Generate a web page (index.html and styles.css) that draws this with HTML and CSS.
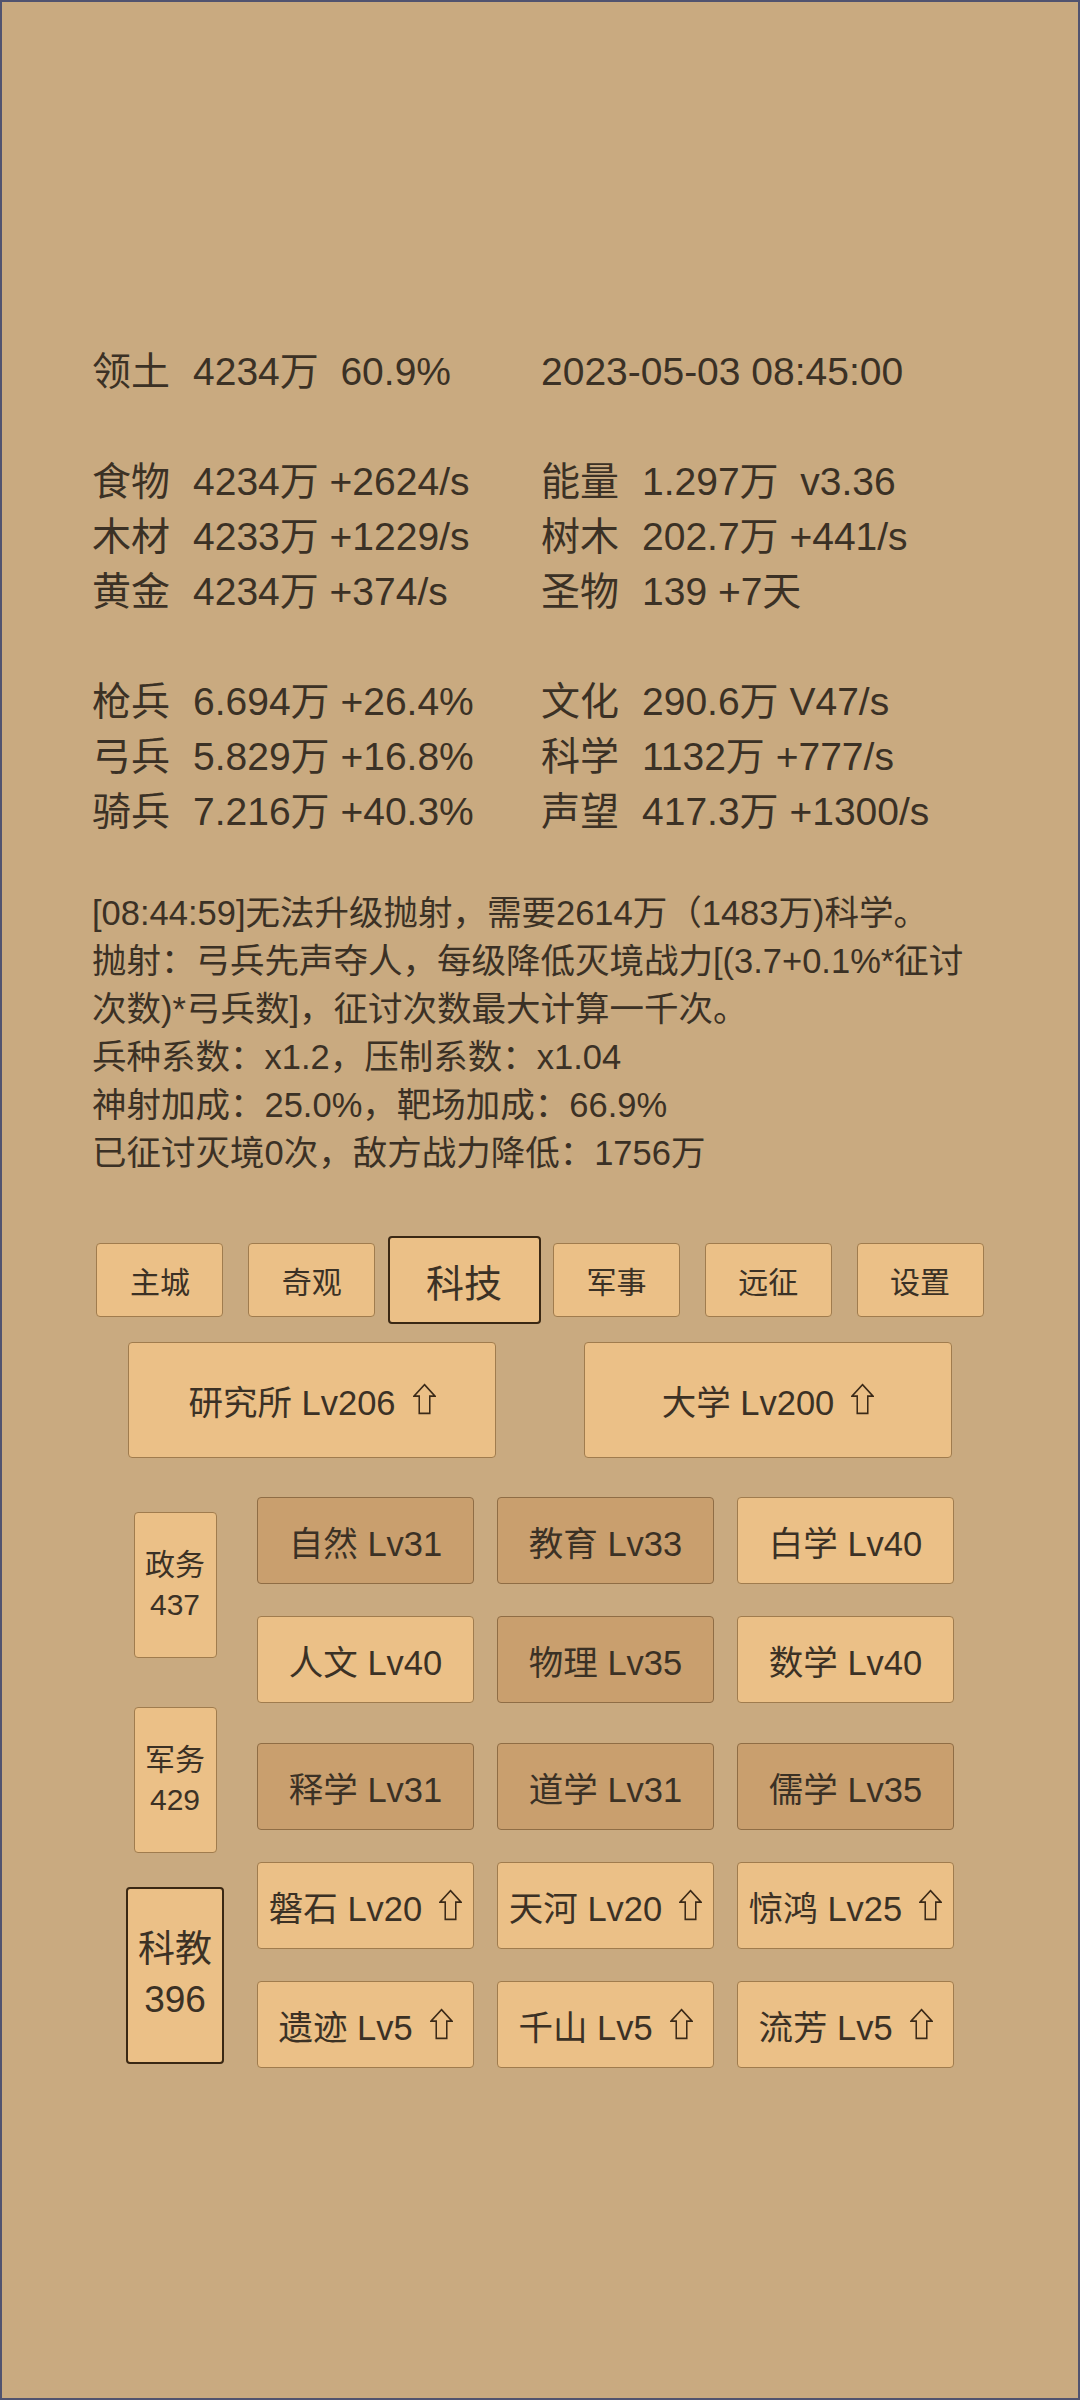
FILE: index.html
```html
<!DOCTYPE html>
<html>
<head>
    <meta charset="utf-8">
    <link rel="stylesheet" href="styles.css">
</head>
<body>
    <div class="stats">
        <div class="stat-group">
            <div class="stat"><span class="k">领土</span><span class="v">4234万  60.9%</span></div>
            <div class="stat"><span class="v">2023-05-03 08:45:00</span></div>
        </div>
        <div class="stat-group">
            <div class="stat"><span class="k">食物</span><span class="v">4234万 +2624/s</span></div>
            <div class="stat"><span class="k">能量</span><span class="v">1.297万  v3.36</span></div>
            <div class="stat"><span class="k">木材</span><span class="v">4233万 +1229/s</span></div>
            <div class="stat"><span class="k">树木</span><span class="v">202.7万 +441/s</span></div>
            <div class="stat"><span class="k">黄金</span><span class="v">4234万 +374/s</span></div>
            <div class="stat"><span class="k">圣物</span><span class="v">139 +7天</span></div>
        </div>
        <div class="stat-group">
            <div class="stat"><span class="k">枪兵</span><span class="v">6.694万 +26.4%</span></div>
            <div class="stat"><span class="k">文化</span><span class="v">290.6万 V47/s</span></div>
            <div class="stat"><span class="k">弓兵</span><span class="v">5.829万 +16.8%</span></div>
            <div class="stat"><span class="k">科学</span><span class="v">1132万 +777/s</span></div>
            <div class="stat"><span class="k">骑兵</span><span class="v">7.216万 +40.3%</span></div>
            <div class="stat"><span class="k">声望</span><span class="v">417.3万 +1300/s</span></div>
        </div>
    </div>

    <div class="message">
        <div>[08:44:59]无法升级抛射，需要2614万（1483万)科学。</div>
        <div>抛射：弓兵先声夺人，每级降低灭境战力[(3.7+0.1%*征讨次数)*弓兵数]，征讨次数最大计算一千次。</div>
        <div>兵种系数：x1.2，压制系数：x1.04</div>
        <div>神射加成：25.0%，靶场加成：66.9%</div>
        <div>已征讨灭境0次，敌方战力降低：1756万</div>
    </div>

    <div class="tabs">
        <div class="tab">主城</div>
        <div class="tab">奇观</div>
        <div class="tab active">科技</div>
        <div class="tab">军事</div>
        <div class="tab">远征</div>
        <div class="tab">设置</div>
    </div>

    <div class="halls">
        <div class="btn hall"><span>研究所 Lv206</span><svg class="up" viewBox="0 0 24 32"><polygon points="12,1 23,13 17.5,13 17.5,31 6.5,31 6.5,13 1,13"/></svg></div>
        <div class="btn hall"><span>大学 Lv200</span><svg class="up" viewBox="0 0 24 32"><polygon points="12,1 23,13 17.5,13 17.5,31 6.5,31 6.5,13 1,13"/></svg></div>
    </div>

    <div class="tech">
        <div class="side">
            <div class="side-slot"><div class="side-btn">政务<br>437</div></div>
            <div class="side-slot"><div class="side-btn">军务<br>429</div></div>
            <div class="side-slot"><div class="side-btn active">科教<br>396</div></div>
        </div>
        <div class="tech-grid">
            <div class="btn dark">自然 Lv31</div>
            <div class="btn dark">教育 Lv33</div>
            <div class="btn">白学 Lv40</div>

            <div class="btn">人文 Lv40</div>
            <div class="btn dark">物理 Lv35</div>
            <div class="btn">数学 Lv40</div>

            <div class="btn dark">释学 Lv31</div>
            <div class="btn dark">道学 Lv31</div>
            <div class="btn dark">儒学 Lv35</div>

            <div class="btn"><span>磐石 Lv20</span><svg class="up" viewBox="0 0 24 32"><polygon points="12,1 23,13 17.5,13 17.5,31 6.5,31 6.5,13 1,13"/></svg></div>
            <div class="btn"><span>天河 Lv20</span><svg class="up" viewBox="0 0 24 32"><polygon points="12,1 23,13 17.5,13 17.5,31 6.5,31 6.5,13 1,13"/></svg></div>
            <div class="btn"><span>惊鸿 Lv25</span><svg class="up" viewBox="0 0 24 32"><polygon points="12,1 23,13 17.5,13 17.5,31 6.5,31 6.5,13 1,13"/></svg></div>

            <div class="btn"><span>遗迹 Lv5</span><svg class="up" viewBox="0 0 24 32"><polygon points="12,1 23,13 17.5,13 17.5,31 6.5,31 6.5,13 1,13"/></svg></div>
            <div class="btn"><span>千山 Lv5</span><svg class="up" viewBox="0 0 24 32"><polygon points="12,1 23,13 17.5,13 17.5,31 6.5,31 6.5,13 1,13"/></svg></div>
            <div class="btn"><span>流芳 Lv5</span><svg class="up" viewBox="0 0 24 32"><polygon points="12,1 23,13 17.5,13 17.5,31 6.5,31 6.5,13 1,13"/></svg></div>
        </div>
    </div>
</body>
</html>
```

FILE: styles.css
```css
html {
    background-color: #c9aa80;
}

body {
    font-family: "Liberation Sans", "Noto Sans CJK SC", sans-serif;
    color: #3b3125;
    background-color: #c9aa80;
    margin: 0;
    width: 1080px;
    min-height: 2400px;
    box-sizing: border-box;
    border: 2px solid #51536f;
}

/* resource lines */
.stats {
    padding: 342px 0 0 90px;
    font-size: 39px;
    line-height: 55px;
}

.stat-group {
    display: grid;
    grid-template-columns: 449px auto;
    margin-bottom: 55px;
}

.stat-group:last-child {
    margin-bottom: 0;
}

.stat {
    white-space: pre;
}

.k {
    display: inline-block;
    width: 101px;
}

.message {
    margin-top: 50px;
    padding-left: 90px;
    width: 890px;
    font-size: 34.5px;
    line-height: 48px;
}

/* page tabs */
.tabs {
    display: grid;
    grid-template-columns: repeat(6, 1fr);
    justify-items: center;
    align-items: center;
    height: 88px;
    margin-top: 59px;
    padding: 0 82px;
}

.tab {
    width: 127px;
    height: 74px;
    box-sizing: border-box;
    display: flex;
    align-items: center;
    justify-content: center;
    font-size: 30px;
    background-color: #ebc087;
    border: 1.5px solid #a07c4e;
    border-radius: 4px;
}

.tab.active {
    width: 153px;
    height: 88px;
    font-size: 38px;
    border: 2px solid #3a2814;
}

.btn {
    box-sizing: border-box;
    display: flex;
    align-items: center;
    justify-content: center;
    white-space: pre;
    font-size: 34.5px;
    background-color: #ebc087;
    border: 1.5px solid #a07c4e;
    border-radius: 4px;
}

.btn.dark {
    background-color: #c99f6e;
    border-color: #8f6d45;
}

.up {
    width: 23px;
    height: 32px;
    margin: 0 0 2px 17px;
    flex-shrink: 0;
    fill: none;
    stroke: #3b2a18;
    stroke-width: 1.6;
}

.halls {
    display: grid;
    grid-template-columns: 1fr 1fr;
    justify-items: center;
    margin-top: 18px;
    padding: 0 82px;
}

.hall {
    width: 368px;
    height: 116px;
}

/* tech tree */
.tech {
    display: flex;
    margin-top: 29.5px;
    padding-left: 91px;
}

.side {
    width: 164px;
    display: flex;
    flex-direction: column;
}

.side-slot {
    height: 195px;
    display: flex;
    align-items: center;
    justify-content: center;
}

.side-btn {
    width: 83px;
    height: 146px;
    box-sizing: border-box;
    display: flex;
    align-items: center;
    justify-content: center;
    text-align: center;
    font-size: 30px;
    line-height: 40px;
    background-color: #ebc087;
    border: 1.5px solid #a07c4e;
    border-radius: 4px;
}

.side-btn.active {
    width: 98px;
    height: 177px;
    font-size: 37px;
    line-height: 50px;
    border: 2px solid #3a2814;
}

.tech-grid {
    display: grid;
    grid-template-columns: repeat(3, 217px);
    grid-template-rows: 87px 87px 95px 87px 87px;
    column-gap: 23px;
    row-gap: 32px;
    padding-top: 9.5px;
}

.tech-grid .btn {
    height: 87px;
    align-self: end;
}
```
